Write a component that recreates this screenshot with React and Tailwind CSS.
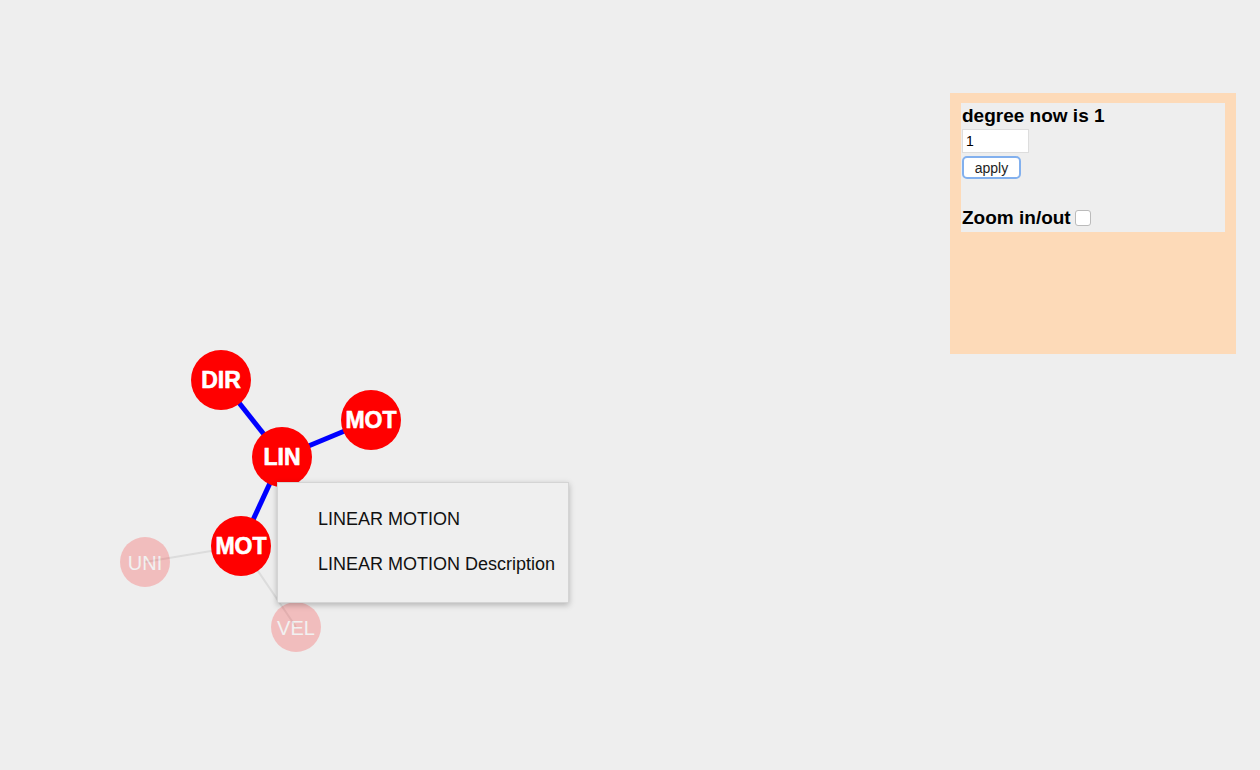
import { useState } from 'react';

const nodes = [
  { id: 'dir', label: 'DIR', x: 221, y: 380, r: 30 },
  { id: 'mot1', label: 'MOT', x: 371, y: 420, r: 30 },
  { id: 'lin', label: 'LIN', x: 282, y: 457, r: 30 },
  { id: 'mot2', label: 'MOT', x: 241, y: 546, r: 30 },
  { id: 'uni', label: 'UNI', x: 145, y: 562, r: 25, faded: true },
  { id: 'vel', label: 'VEL', x: 296, y: 627, r: 25, faded: true },
];

const links = [
  { a: 'dir', b: 'lin' },
  { a: 'lin', b: 'mot1' },
  { a: 'lin', b: 'mot2' },
  { a: 'mot2', b: 'uni', faded: true },
  { a: 'mot2', b: 'vel', faded: true },
];

const byId = id => nodes.find(n => n.id === id);

export default function App() {
  const [degree, setDegree] = useState('1');

  return (
    <div
      className="relative w-[1260px] h-[770px] bg-[#eeeeee] overflow-hidden"
      style={{ fontFamily: '"Liberation Sans", Arial, sans-serif' }}
    >
      <div className="flex justify-end pt-[93px] pr-[24px]">
        <div className="w-[286px] h-[261px] bg-[#fddab8] pt-[10px] px-[11px]">
          <div className="bg-[#eeeeee] h-[129px] pl-[1px] text-black">
            <div className="text-[19px] font-bold leading-[24px] pt-[1px]">
              degree now is 1
            </div>
            <input
              value={degree}
              onChange={e => setDegree(e.target.value)}
              className="block w-[67px] h-[24px] mt-[1px] bg-white border border-[#dddddd] px-[3px] text-[14px] outline-none"
            />
            <button className="block w-[59px] h-[23px] mt-[3px] bg-white border-2 border-[#82b0ee] rounded-[5px] text-[14px] leading-[18px] text-[#222]">
              apply
            </button>
            <div className="flex items-center mt-[27px] text-[19px] font-bold leading-[24px]">
              Zoom in/out
              <span className="ml-[4px] w-[16px] h-[16px] bg-white border border-[#bbbbbb] rounded-[3px]" />
            </div>
          </div>
        </div>
      </div>

      <svg className="absolute left-0 top-0" width="1260" height="770">
        {links.map(l => {
          const a = byId(l.a);
          const b = byId(l.b);
          return (
            <line
              key={l.a + l.b}
              x1={a.x}
              y1={a.y}
              x2={b.x}
              y2={b.y}
              stroke={l.faded ? '#dcdcdc' : '#0000ff'}
              strokeWidth={l.faded ? 2 : 5}
            />
          );
        })}
        {nodes.map(n => (
          <g key={n.id} opacity={n.faded ? 0.2 : 1}>
            <circle cx={n.x} cy={n.y} r={n.r} fill="#ff0000" />
            <text
              x={n.x}
              y={n.y + 8}
              textAnchor="middle"
              fill="#ffffff"
              stroke="#ffffff"
              strokeWidth={n.faded ? 0 : 0.6}
              fontSize={n.faded ? 20 : 23}
              fontWeight={n.faded ? 'normal' : 'bold'}
              fontFamily='"Liberation Sans", Arial, sans-serif'
            >
              {n.label}
            </text>
          </g>
        ))}
      </svg>

      <div className="absolute left-[277px] top-[482px] w-[292px] h-[121px] bg-[#efefef] border border-[#d4d4d4] shadow-[0_2px_6px_rgba(0,0,0,0.25)] pl-[40px] pt-[26px] text-[18px] text-[#111]">
        <div className="leading-[20px]">LINEAR MOTION</div>
        <div className="leading-[20px] mt-[25px]">LINEAR MOTION Description</div>
      </div>
    </div>
  );
}
